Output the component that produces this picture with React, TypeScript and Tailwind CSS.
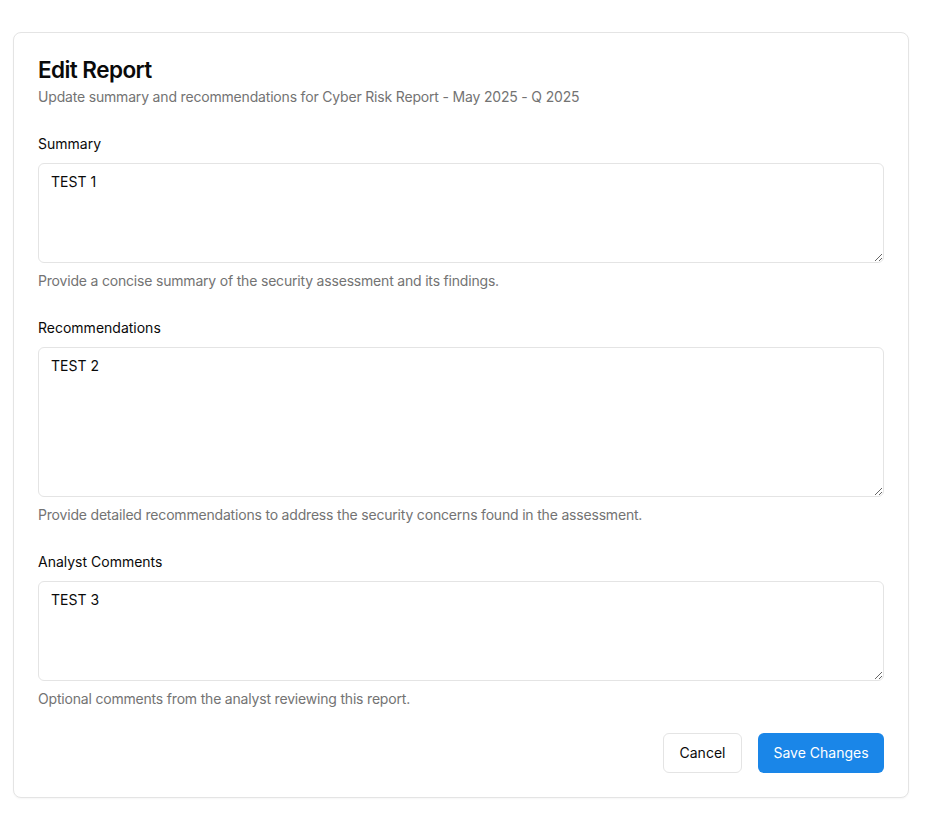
import { useState } from 'react';

const fields = [
  {
    id: 'summary',
    label: 'Summary',
    value: 'TEST 1',
    height: 'h-[100px]',
    help: 'Provide a concise summary of the security assessment and its findings.',
  },
  {
    id: 'recommendations',
    label: 'Recommendations',
    value: 'TEST 2',
    height: 'h-[150px]',
    help: 'Provide detailed recommendations to address the security concerns found in the assessment.',
  },
  {
    id: 'comments',
    label: 'Analyst Comments',
    value: 'TEST 3',
    height: 'h-[100px]',
    help: 'Optional comments from the analyst reviewing this report.',
  },
];

export default function App() {
  const [values, setValues] = useState<Record<string, string>>(
    Object.fromEntries(fields.map(f => [f.id, f.value]))
  );

  return (
    <div className="min-h-screen bg-white pt-[32px] pl-[13px] font-['Inter','Noto_Sans',sans-serif] text-[#0a0a0a]">
      <div className="w-[896px] rounded-lg border border-[#e4e4e4] bg-white px-6 pt-[23px] pb-6 shadow-[0_1px_2px_rgba(0,0,0,0.04)]">
        <h1 className="text-[22.5px] leading-[28px] font-semibold tracking-tight">Edit Report</h1>
        <p className="mt-[3px] text-sm leading-5 tracking-[-0.18px] text-[#737373]">
          Update summary and recommendations for Cyber Risk Report - May 2025 - Q 2025
        </p>

        <form className="mt-[27px]" onSubmit={e => e.preventDefault()}>
          {fields.map((f, i) => (
            <div key={f.id} className={i > 0 ? 'mt-[27px]' : ''}>
              <label htmlFor={f.id} className="block text-sm leading-5 font-normal">
                {f.label}
              </label>
              <textarea
                id={f.id}
                value={values[f.id]}
                onChange={e => setValues(prev => ({ ...prev, [f.id]: e.target.value }))}
                className={`mt-[9px] block w-full ${f.height} rounded-md border border-[#e4e4e4] px-3 py-2 text-sm leading-5 outline-none`}
              />
              <p className="mt-2 text-sm leading-5 tracking-[-0.19px] text-[#737373]">{f.help}</p>
            </div>
          ))}

          <div className="mt-6 flex justify-end gap-4">
            <button
              type="button"
              className="h-10 w-[79px] rounded-md border border-[#e4e4e4] bg-white text-sm font-normal"
            >
              Cancel
            </button>
            <button
              type="submit"
              className="h-10 w-[126px] rounded-md bg-[#1a86e8] text-sm font-normal text-white"
            >
              Save Changes
            </button>
          </div>
        </form>
      </div>
    </div>
  );
}
